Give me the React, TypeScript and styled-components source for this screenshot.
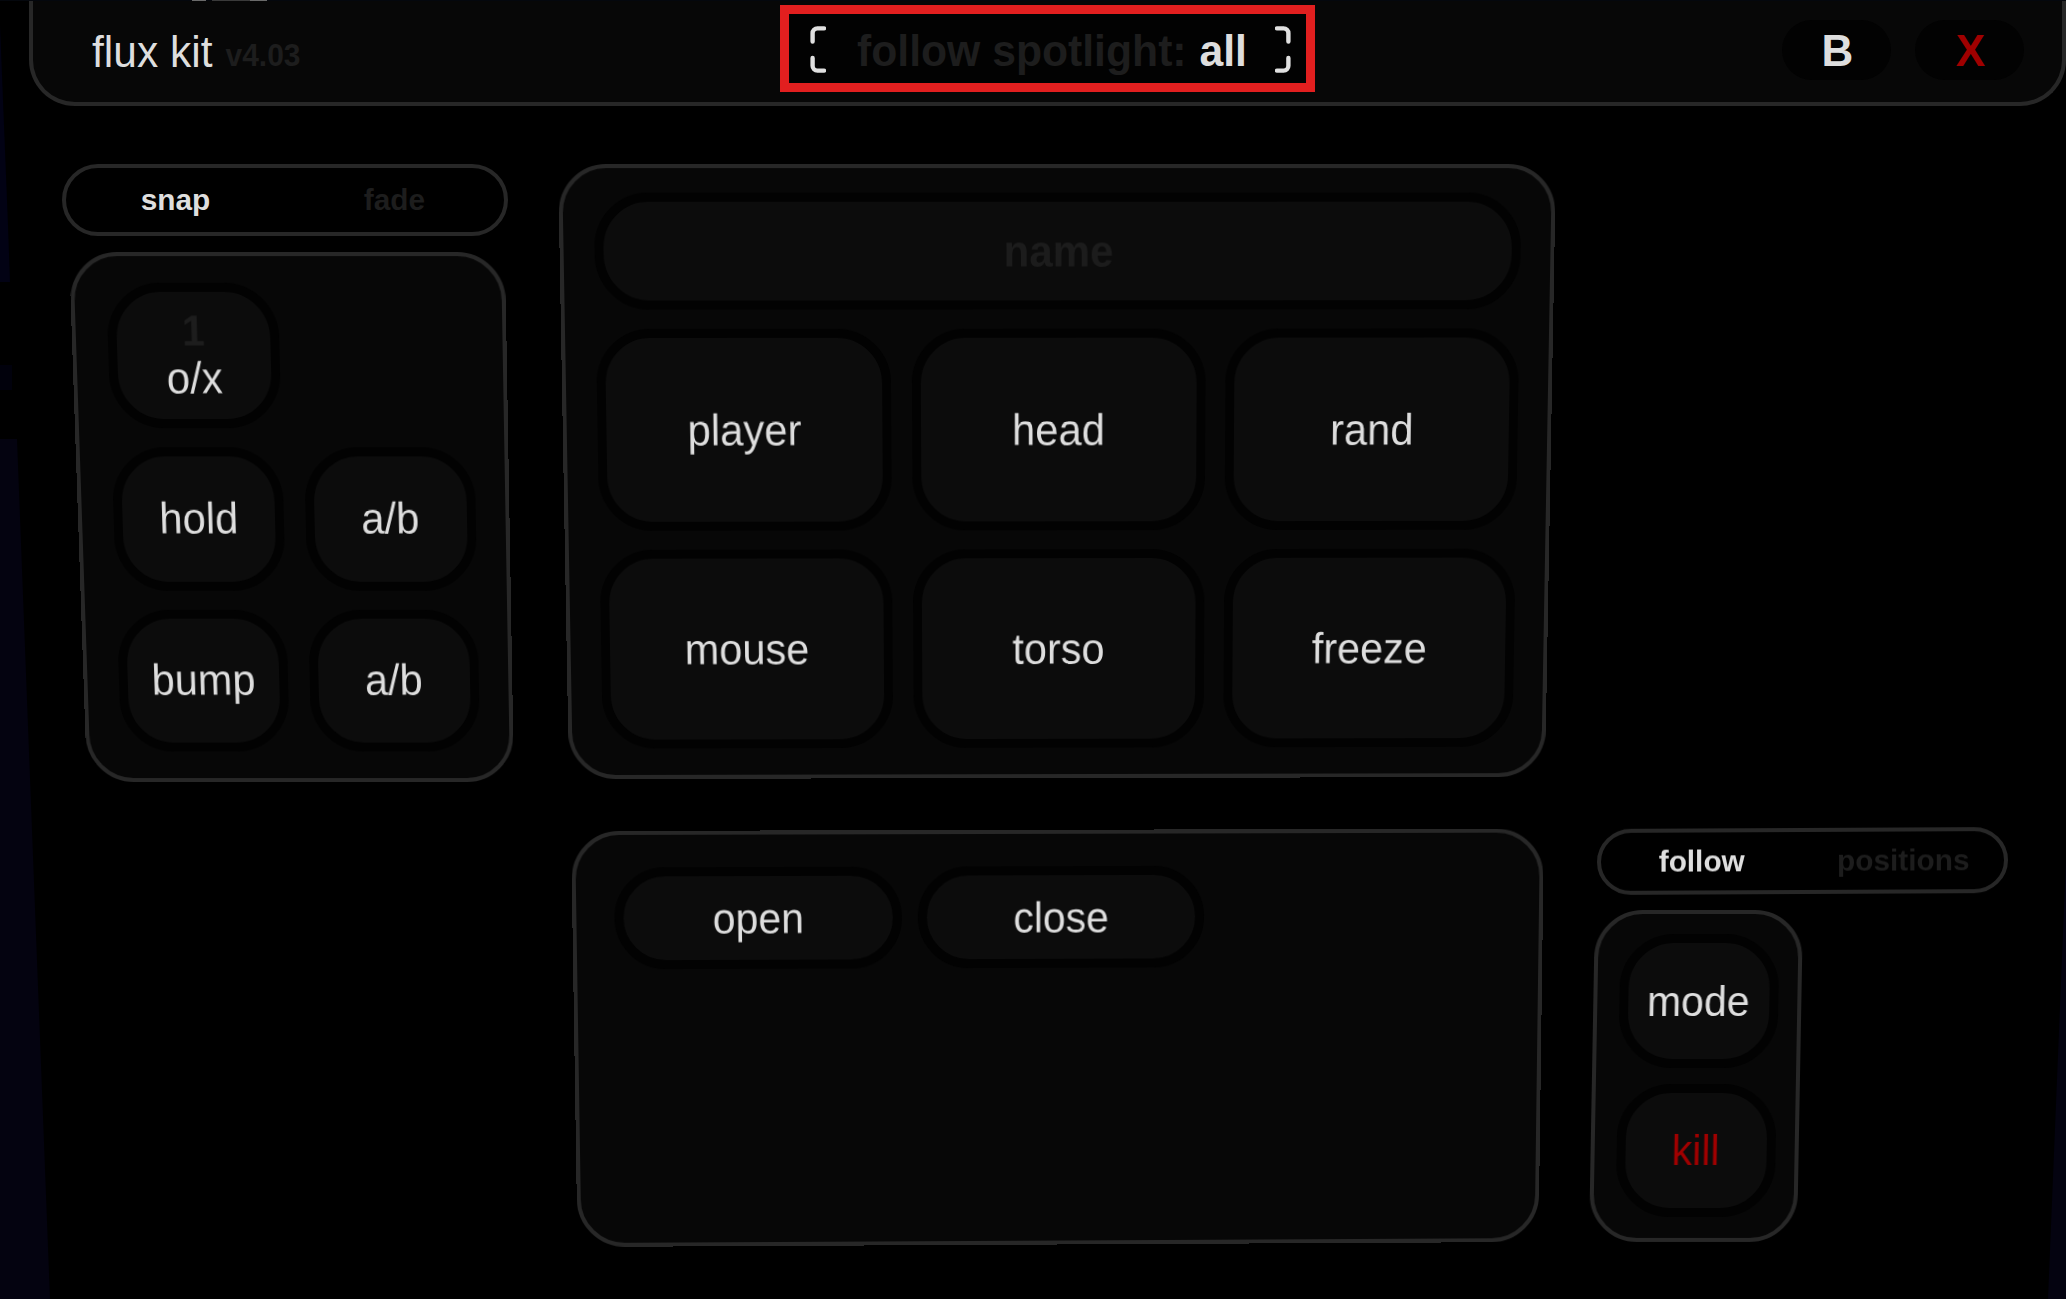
import styled, { createGlobalStyle, css } from "styled-components";

type Corner = [number, number];
type Warp = [Corner, Corner, Corner, Corner];

// the ui is photographed off a curved surface, so each panel gets its four corners nudged
function warpMatrix(w: number, h: number, warp: Warp) {
  const [x0, y0] = [warp[0][0], warp[0][1]];
  const [x1, y1] = [w + warp[1][0], warp[1][1]];
  const [x2, y2] = [w + warp[2][0], h + warp[2][1]];
  const [x3, y3] = [warp[3][0], h + warp[3][1]];

  const dx1 = x1 - x2;
  const dx2 = x3 - x2;
  const sx = x0 - x1 + x2 - x3;
  const dy1 = y1 - y2;
  const dy2 = y3 - y2;
  const sy = y0 - y1 + y2 - y3;
  const den = dx1 * dy2 - dx2 * dy1;
  const g = (sx * dy2 - dx2 * sy) / den;
  const k = (dx1 * sy - sx * dy1) / den;
  const a = x1 - x0 + g * x1;
  const b = x3 - x0 + k * x3;
  const d = y1 - y0 + g * y1;
  const e = y3 - y0 + k * y3;

  return `matrix3d(${[a / w, d / w, 0, g / w, b / h, e / h, 0, k / h, 0, 0, 1, 0, x0, y0, 0, 1].join(",")})`;
}

const colors = {
  line: "#272727",
  panel: "#070707",
  key: "#0c0c0c",
  ring: "#020202",
  text: "#dedede",
  dim: "#1d1d1d",
  danger: "#a00000",
  flag: "#e21f1f",
};

const tall = css`
  display: inline-block;
  transform: scaleY(1.04);
`;

const GlobalStyle = createGlobalStyle`
  * {
    box-sizing: border-box;
  }
  html, body {
    margin: 0;
    padding: 0;
    background: #000;
  }
  body {
    font-family: "Liberation Sans", Arial, sans-serif;
    color: ${colors.text};
  }
`;

const Screen = styled.div`
  position: relative;
  width: 2066px;
  height: 1299px;
  overflow: hidden;
  background: #000;
`;

const Sliver = styled.div<{ $points: string; $color: string }>`
  position: absolute;
  inset: 0;
  background: ${({ $color }) => $color};
  clip-path: polygon(${({ $points }) => $points});
`;

const TopEdge = styled.div`
  position: absolute;
  z-index: 2;
  top: 0;
  left: 0;
  width: 100%;
  height: 1px;
  background: linear-gradient(
    90deg,
    #04070d 0,
    #04070d 192px,
    #6a6a6a 192px,
    #6a6a6a 206px,
    #04070d 206px,
    #04070d 212px,
    #3a3a3a 212px,
    #3a3a3a 250px,
    #6a6a6a 250px,
    #6a6a6a 267px,
    #04070d 267px
  );
`;

const Header = styled.header`
  position: relative;
  display: grid;
  grid-template-columns: 1fr auto 1fr;
  align-items: center;
  width: 2037px;
  height: 106px;
  margin-left: 29px;
  padding: 0 38px;
  background: ${colors.panel};
  border: 4.5px solid ${colors.line};
  border-top: 0;
  border-radius: 0 0 46px 46px;
`;

const Brand = styled.div`
  display: flex;
  align-items: baseline;
  gap: 13px;
  margin-top: 1px;
  padding-left: 21px;
`;

const BrandName = styled.span`
  ${tall}
  font-size: 42.5px;
`;

const BrandVersion = styled.span`
  ${tall}
  font-size: 30px;
  font-weight: 700;
  color: ${colors.dim};
`;

const Spotlight = styled.div`
  display: flex;
  align-items: center;
  width: 535px;
  height: 87px;
  margin-bottom: 6px;
  padding-left: 21px;
  background: #020202;
  border: 9px solid ${colors.flag};
`;

const BracketIcon = styled.svg<{ $flip?: boolean }>`
  flex: none;
  width: 16px;
  height: 47px;
  margin-top: 2px;
  transform: ${({ $flip }) => ($flip ? "scaleX(-1)" : "none")};
`;

const SpotlightText = styled.div`
  ${tall}
  flex: none;
  width: 449px;
  padding: 4px 0 0 31px;
  font-size: 42.7px;
  font-weight: 700;
  white-space: nowrap;
  color: ${colors.dim};
`;

const SpotlightValue = styled.span`
  margin-left: 1px;
  color: ${colors.text};
`;

const HeaderActions = styled.div`
  display: flex;
  justify-content: flex-end;
  gap: 24px;
  margin-bottom: 2px;
`;

const PillButton = styled.div<{ $danger?: boolean }>`
  display: flex;
  align-items: center;
  justify-content: center;
  width: 109px;
  height: 60px;
  padding: 1px 0 0 2px;
  font-size: 44px;
  font-weight: 700;
  color: ${({ $danger }) => ($danger ? colors.danger : colors.text)};
  background: ${colors.ring};
  border-radius: 30px;
`;

const Body = styled.main`
  display: flex;
  align-items: flex-start;
  padding: 58px 0 0 62px;
`;

const LeftColumn = styled.section`
  flex: none;
  display: flex;
  flex-direction: column;
  gap: 16px;
  width: 446px;
`;

const CenterColumn = styled.section`
  flex: none;
  display: flex;
  flex-direction: column;
  gap: 52px;
  width: 998px;
  margin-left: 50px;
`;

const RightColumn = styled.section`
  flex: none;
  display: flex;
  flex-direction: column;
  gap: 15px;
  width: 413px;
  margin-left: 39px;
  padding-top: 663px;
`;

const Warped = styled.div<{ $w: number; $h: number; $warp: Warp }>`
  width: ${({ $w }) => $w}px;
  height: ${({ $h }) => $h}px;
  transform-origin: 0 0;
  transform: ${({ $w, $h, $warp }) => warpMatrix($w, $h, $warp)};
`;

const Toggle = styled(Warped)<{ $inset?: number }>`
  flex: none;
  display: grid;
  grid-template-columns: 1fr 1fr;
  align-items: center;
  margin-left: ${({ $inset }) => $inset ?? 0}px;
  background: #000;
  border: 4.5px solid ${colors.line};
  border-radius: 36px;
`;

const ToggleItem = styled.div<{ $active?: boolean }>`
  text-align: center;
  font-size: 29.8px;
  font-weight: 700;
  color: ${({ $active }) => ($active ? colors.text : colors.dim)};
`;

const Panel = styled(Warped)<{ $inset?: number }>`
  flex: none;
  margin-left: ${({ $inset }) => $inset ?? 0}px;
  background: ${colors.panel};
  border: 4.5px solid ${colors.line};
  border-radius: 48px;
`;

const FadeGrid = styled.div`
  display: grid;
  grid-template-columns: 172px 172px;
  grid-auto-rows: 143px;
  gap: 19px 21.5px;
  padding: 25.5px 0 0 32px;
`;

const BlockGrid = styled.div`
  display: grid;
  grid-template-columns: repeat(3, 296px);
  grid-template-rows: 115px 201px 201px;
  gap: 19px 20.7px;
  padding: 24px 0 0 31px;
`;

const GoboRow = styled.div`
  display: flex;
  gap: 16px;
  padding: 32px 0 0 38px;
`;

const FollowStack = styled.div`
  display: flex;
  flex-direction: column;
  gap: 16px;
  padding: 19.5px 0 0 21.5px;
`;

const Key = styled.div<{ $width?: number; $height?: number; $size?: number; $danger?: boolean }>`
  display: flex;
  flex-direction: column;
  align-items: center;
  justify-content: center;
  width: ${({ $width }) => ($width ? `${$width}px` : "auto")};
  height: ${({ $height }) => ($height ? `${$height}px` : "auto")};
  font-size: ${({ $size }) => $size ?? 42.2}px;
  color: ${({ $danger }) => ($danger ? colors.danger : colors.text)};
  background: ${colors.key};
  border: 9.5px solid ${colors.ring};
  border-radius: 54px;
`;

const KeyLabel = styled.span`
  ${tall}
  line-height: 48px;
`;

const KeyIndex = styled.span`
  ${tall}
  line-height: 46px;
  font-size: 41px;
  font-weight: 700;
  color: ${colors.dim};
`;

const NameField = styled(Key)`
  grid-column: 1 / -1;
  font-weight: 700;
  color: #1c1c1c;
`;

function Bracket({ flip }: { flip?: boolean }) {
  return (
    <BracketIcon $flip={flip} viewBox="0 0 16 47" fill="none" stroke="#e0e0e0" strokeWidth="4.4" strokeLinecap="round">
      <path d="M14 2.4H7.4a4.8 4.8 0 0 0-4.8 4.8V15.5" />
      <path d="M2.6 32v7.8a4.8 4.8 0 0 0 4.8 4.8H14" />
    </BracketIcon>
  );
}

export default function App() {
  return (
    <Screen>
      <GlobalStyle />
      <Sliver $color="#020214" $points="0 25px, 8px 225px, 10px 282px, 0 282px" />
      <Sliver $color="#01010c" $points="0 365px, 12px 365px, 12px 390px, 0 390px" />
      <Sliver $color="#040310" $points="0 439px, 17px 439px, 50px 1299px, 0 1299px" />
      <Sliver $color="#040310" $points="2066px 860px, 2066px 1299px, 2048px 1299px" />
      <TopEdge />

      <Header>
        <Brand>
          <BrandName>flux kit</BrandName>
          <BrandVersion>v4.03</BrandVersion>
        </Brand>
        <Spotlight>
          <Bracket />
          <SpotlightText>
            follow spotlight: <SpotlightValue>all</SpotlightValue>
          </SpotlightText>
          <Bracket flip />
        </Spotlight>
        <HeaderActions>
          <PillButton>B</PillButton>
          <PillButton $danger>X</PillButton>
        </HeaderActions>
      </Header>

      <Body>
        <LeftColumn>
          <Toggle $w={446} $h={72} $warp={[[0, 0], [0, 0], [0, 0], [0, 0]]}>
            <ToggleItem $active>snap</ToggleItem>
            <ToggleItem>fade</ToggleItem>
          </Toggle>
          <Panel $inset={7} $w={436} $h={528} $warp={[[0, 0], [0, 0], [9, 2], [18, 2]]}>
            <FadeGrid>
              <Key>
                <KeyIndex>1</KeyIndex>
                <KeyLabel>o/x</KeyLabel>
              </Key>
              <div />
              <Key><KeyLabel>hold</KeyLabel></Key>
              <Key><KeyLabel>a/b</KeyLabel></Key>
              <Key><KeyLabel>bump</KeyLabel></Key>
              <Key><KeyLabel>a/b</KeyLabel></Key>
            </FadeGrid>
          </Panel>
        </LeftColumn>

        <CenterColumn>
          <Panel $w={998} $h={614} $warp={[[0, 0], [0, 0], [-11, -1], [11, 1]]}>
            <BlockGrid>
              <NameField><KeyLabel>name</KeyLabel></NameField>
              <Key><KeyLabel>player</KeyLabel></Key>
              <Key><KeyLabel>head</KeyLabel></Key>
              <Key><KeyLabel>rand</KeyLabel></Key>
              <Key><KeyLabel>mouse</KeyLabel></Key>
              <Key><KeyLabel>torso</KeyLabel></Key>
              <Key><KeyLabel>freeze</KeyLabel></Key>
            </BlockGrid>
          </Panel>
          <Panel $inset={12.5} $w={973} $h={415} $warp={[[0, 1], [0, -1.5], [-5.5, -3], [6.5, 2]]}>
            <GoboRow>
              <Key $width={287} $height={101} $size={41}><KeyLabel>open</KeyLabel></Key>
              <Key $width={287} $height={101} $size={41}><KeyLabel>close</KeyLabel></Key>
            </GoboRow>
          </Panel>
        </CenterColumn>

        <RightColumn>
          <Toggle $inset={2} $w={411} $h={68} $warp={[[0, 2], [0, 0], [0, -2], [0, 0]]}>
            <ToggleItem $active>follow</ToggleItem>
            <ToggleItem>positions</ToggleItem>
          </Toggle>
          <Panel $w={208} $h={332} $warp={[[0, 0], [0, 0], [-6, 0], [-6, 0]]}>
            <FollowStack>
              <Key $width={159} $height={134} $size={41}><KeyLabel>mode</KeyLabel></Key>
              <Key $width={159} $height={133} $size={41} $danger><KeyLabel>kill</KeyLabel></Key>
            </FollowStack>
          </Panel>
        </RightColumn>
      </Body>
    </Screen>
  );
}
